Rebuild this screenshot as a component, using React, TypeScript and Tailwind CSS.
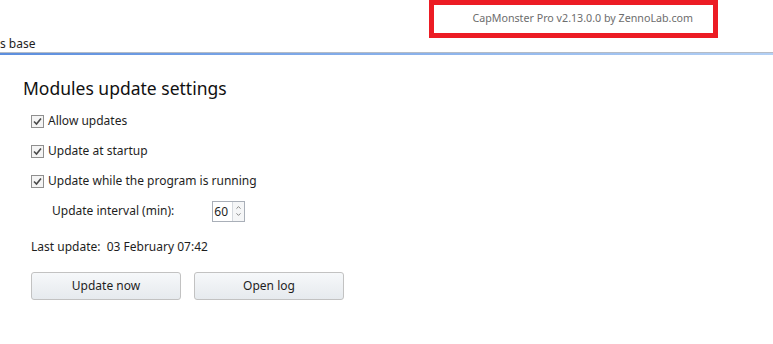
import { ChevronUp, ChevronDown } from 'lucide-react'

const font = { fontFamily: '"Noto Sans", "Open Sans", sans-serif' }

function Check({ label }: { label: string }) {
  return (
    <label className="flex items-center h-[30px] text-[12px] text-[#1e1e1e]">
      <span className="shrink-0 w-[13px] h-[13px] border border-[#8f8f8f] bg-[#f4f4f4] flex items-center justify-center">
        <svg width="9" height="9" viewBox="0 0 9 9">
          <path d="M1 4.5 L3.5 7 L8 1.5" stroke="#4a4a4a" strokeWidth="1.6" fill="none" />
        </svg>
      </span>
      <span className="pl-[4px]">{label}</span>
    </label>
  )
}

function Btn({ children }: { children: string }) {
  return (
    <button className="w-[150px] h-[28px] rounded-[3px] border border-[#c2c2c2] bg-gradient-to-b from-[#f6f8fa] to-[#e6eaee] text-[12px] text-[#1e1e1e]">
      {children}
    </button>
  )
}

export default function App() {
  return (
    <div className="w-[773px] h-[344px] bg-white overflow-hidden" style={font}>
      <div className="h-[52px] flex items-start justify-between">
        <div className="pt-[35px] text-[12px] text-[#1e1e1e]">s base</div>
        <div className="mr-[55px] w-[289px] h-[38px] border-[5px] border-[#ec1c24] flex items-center justify-end pr-[20px] pb-[2px] text-[10.7px] text-[#6d6d6d]">
          CapMonster Pro v2.13.0.0 by ZennoLab.com
        </div>
      </div>
      <div className="h-[1px] bg-[#b5bcc6]" />
      <div className="h-[2px] bg-gradient-to-r from-[#5c8ede] to-[#b3d0f5]" />
      <div className="pl-[23px] pt-[20px]">
        <h1 className="text-[17.5px] leading-[26px] text-[#111]">Modules update settings</h1>
        <div className="pl-[8px] mt-[5px]">
          <Check label="Allow updates" />
          <Check label="Update at startup" />
          <Check label="Update while the program is running" />
          <div className="flex items-center h-[30px] pl-[21px] text-[12px] text-[#1e1e1e]">
            <span className="w-[160px]">Update interval (min):</span>
            <div className="flex w-[33px] h-[21px] border border-[#a9afb8]">
              <span className="flex-1 text-right pr-[4px] leading-[19px]">60</span>
              <div className="w-[12px] border-l border-[#d5d9de] bg-[#f5f6f7] flex flex-col items-center justify-center">
                <ChevronUp size={7} strokeWidth={3} className="text-[#777]" />
                <ChevronDown size={7} strokeWidth={3} className="text-[#777]" />
              </div>
            </div>
          </div>
          <div className="h-[38px] flex items-center pt-[4px] text-[12px] text-[#1e1e1e]">
            Last update:&nbsp; 03 February 07:42
          </div>
          <div className="flex gap-[13px] mt-[8px]">
            <Btn>Update now</Btn>
            <Btn>Open log</Btn>
          </div>
        </div>
      </div>
    </div>
  )
}
